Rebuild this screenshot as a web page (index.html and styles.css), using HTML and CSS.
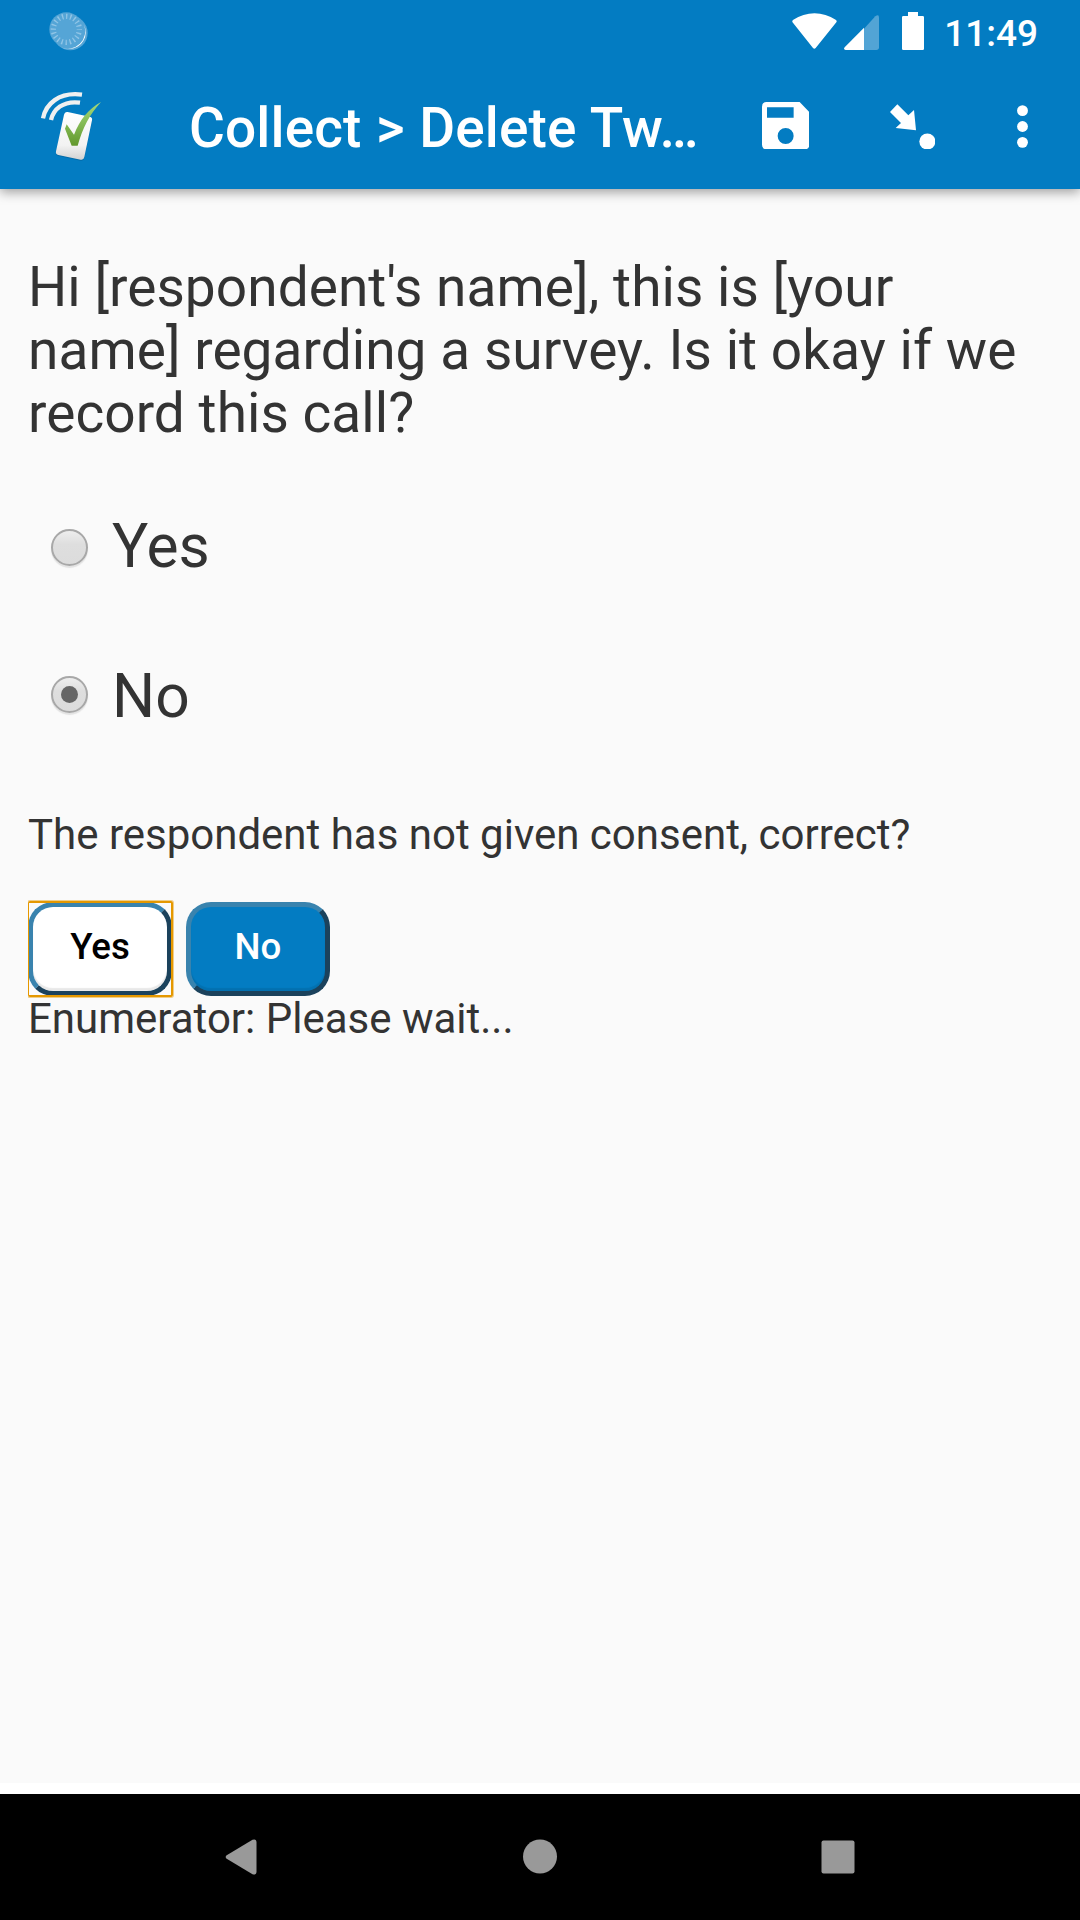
FILE: index.html
```
<!DOCTYPE html>
<html lang="en">
<head>
<meta charset="utf-8">
<title>Collect</title>
<link rel="stylesheet" href="styles.css">
</head>
<body>
<div class="screen">
  <header class="header">
    <div class="status-bar">
      <svg class="sync" viewBox="0 0 120 120">
        <circle cx="64" cy="63" r="52" fill="#55a5d6"/>
        <path d="M104 37A52 52 0 0 1 34 105Q44 111 62 111A50 50 0 0 0 104 37Z" fill="#fff"/>
        <circle cx="52" cy="52" r="51" fill="#55a5d6"/>
        <circle cx="52" cy="52" r="39" fill="none" stroke="#91c5e6" stroke-width="16" stroke-dasharray="4 8.252" stroke-dashoffset="2"/>
      </svg>
      <div class="status-icons">
        <svg class="wifi" viewBox="0 0 135 108"><path d="M1 27Q0 23 4 20C42-6 93-6 131 20Q136 23 133 28L71 105Q67 110 63 105Z" fill="#fff"/></svg>
        <svg class="signal" viewBox="0 0 105 105"><path d="M60 41L94 4Q105-4 105 8V97Q105 105 97 105H60Z" fill="#52a4d5"/><path d="M60 38V105H5Q-3 104 2 97Z" fill="#fff"/></svg>
        <svg class="battery" viewBox="0 0 66 114"><path d="M18 0H48V12H62Q66 12 66 16V110Q66 114 62 114H4Q0 114 0 110V16Q0 12 4 12H18Z" fill="#fff"/></svg>
        <span class="clock">11:49</span>
      </div>
    </div>
    <div class="toolbar">
      <svg class="logo" viewBox="60 270 189 219">
        <defs>
          <linearGradient id="card" x1="0" y1="0" x2="0" y2="1"><stop offset="0" stop-color="#fff"/><stop offset=".7" stop-color="#f2f2f2"/><stop offset="1" stop-color="#d2d2d2"/></linearGradient>
          <linearGradient id="tick" x1="0" y1="0" x2="0" y2="1"><stop offset="0" stop-color="#a5db7b"/><stop offset="1" stop-color="#62982d"/></linearGradient>
        </defs>
        <path d="M69 355C77 313 116 275 186 284" fill="none" stroke="#f0f0f0" stroke-width="13"/>
        <path d="M93 360C100 329 128 301 180 308" fill="none" stroke="#f0f0f0" stroke-width="13"/>
        <path d="M143 340L209 353Q218 355 216 364L193 474Q191 484 182 482L115 468Q106 466 108 457L132 347Q134 338 143 340Z" fill="#00568c" opacity=".45"/>
        <path d="M143 336L209 350Q218 352 216 361L193 471Q191 481 182 479L115 465Q106 463 108 454L132 344Q134 334 143 336Z" fill="url(#card)"/>
        <path d="M135 386L140 373L162 404C180 359 205 327 243 306C209 343 188 383 173 437H155Z" fill="url(#tick)"/>
      </svg>
      <h1 class="title">Collect &gt; Delete Tw…</h1>
      <svg class="save" viewBox="66 306 142 142"><path fill-rule="evenodd" d="M80 306H179L208 336V434Q208 448 194 448H80Q66 448 66 434V320Q66 306 80 306ZM81 322V353H161V322ZM137 384A24 24 0 1 0 137 432A24 24 0 1 0 137 384Z" fill="#fff"/></svg>
      <svg class="goto" viewBox="450 311 137 137"><path d="M472 312L505 345L522 329L528 390L467 383L483 368L450 335Z" fill="#fff"/><circle cx="562" cy="423.500" r="24" fill="#fff"/></svg>
      <svg class="more" viewBox="831 315 33 129"><g fill="#fff"><circle cx="847.500" cy="332" r="16.300"/><circle cx="847.500" cy="379.500" r="16.300"/><circle cx="847.500" cy="427" r="16.300"/></g></svg>
    </div>
  </header>

  <main class="form">
    <p class="question">Hi [respondent's name], this is [your name] regarding a survey. Is it okay if we record this call?</p>
    <div class="choices">
      <div class="choice"><span class="radio"></span><span class="label">Yes</span></div>
      <div class="choice"><span class="radio checked"></span><span class="label">No</span></div>
    </div>
    <p class="note">The respondent has not given consent, correct?</p>
    <div class="buttons">
      <button class="btn focused">Yes</button>
      <button class="btn primary">No</button>
    </div>
    <p class="note">Enumerator: Please wait...</p>
  </main>

  <nav class="nav-bar">
    <svg class="nav-icon" viewBox="0 0 36 36"><path d="M1.700 16.300Q-.300 18 1.700 19.800L27.500 35.200Q31.500 36.500 31.500 32.500V3.500Q31.500-.500 27.500 .800Z" fill="#999"/></svg>
    <svg class="nav-icon" viewBox="0 0 36 36"><circle cx="17" cy="17.500" r="17" fill="#999"/></svg>
    <svg class="nav-icon" viewBox="0 0 36 36"><rect x="1.500" y="1.500" width="33" height="33" rx="2" fill="#999"/></svg>
  </nav>
</div>
</body>
</html>
```
FILE: styles.css
```
* { box-sizing: border-box; }

body {
  margin: 0;
  font-family: Roboto, sans-serif;
  color: #333;
  background: #fafafa;
}

h1, p { margin: 0; font-weight: 400; }
svg { display: block; flex: none; }

.screen {
  display: flex;
  flex-direction: column;
  width: 1080px;
  height: 1920px;
  overflow: hidden;
}

.header {
  height: 189px;
  flex: none;
  background: #037cc2;
  color: #fff;
  box-shadow: 0 3px 11px rgba(0, 0, 0, .38);
}

.status-bar {
  display: flex;
  justify-content: space-between;
  height: 66px;
  padding: 12px 42px 0 49px;
}

.sync { width: 40px; height: 40px; }
.status-icons { display: flex; align-items: flex-start; }
.wifi { width: 45px; height: 36px; margin: 1px 7px 0 0; }
.signal { width: 35px; height: 35px; margin: 3px 23px 0 0; }
.battery { width: 22px; height: 38px; margin-right: 20px; }
.clock { font-size: 37px; font-weight: 500; line-height: 43px; }

.toolbar {
  display: flex;
  align-items: center;
  height: 123px;
  padding-left: 40px;
}

.logo { width: 63px; height: 73px; margin-top: -2px; }
.title {
  width: 573px;
  padding: 1px 0 0 86px;
  font-size: 55px;
  font-weight: 500;
  line-height: 65px;
  letter-spacing: .12px;
  word-spacing: .7px;
  white-space: nowrap;
}
.save { width: 47.300px; height: 47.300px; margin: -4px 0 0 86px; }
.goto { width: 45.700px; height: 45.700px; margin: -2px 0 0 80.500px; }
.more { width: 11px; height: 43px; margin: -2px 0 0 81.500px; }

.form { flex: 1; padding: 67px 28px 0; }

.question { font-size: 55px; line-height: 63px; letter-spacing: .05px; }

.choices { padding-top: 66px; }
.choice {
  display: flex;
  align-items: flex-start;
  height: 150px;
  padding-left: 23px;
}
.choice + .choice .radio { margin-top: 15px; }
.label { font-size: 60.500px; line-height: 72px; margin-left: 24px; }
.radio {
  display: flex;
  align-items: center;
  justify-content: center;
  width: 37px;
  height: 37px;
  margin-top: 18px;
  border: 2px solid #a8a8a8;
  border-radius: 50%;
  background: linear-gradient(#eee, #dedede 40%, #dcdcdc);
  box-shadow: 0 2px 1px #e2e2e2;
}
.radio.checked::after {
  content: "";
  width: 17px;
  height: 17px;
  border-radius: 50%;
  background: #666;
}

.note { font-size: 42px; line-height: 48px; }
.buttons + .note { margin-top: -1px; }

.buttons { display: flex; gap: 14px; padding: 43px 0 0; }
.btn {
  position: relative;
  width: 144px;
  height: 94px;
  padding: 0 0 5px;
  border: 5px solid;
  border-color: #3983ae #1b425c #1b425c #3983ae;
  border-radius: 25px;
  background: #fff;
  box-shadow: inset 0 -3px 1px rgba(0, 0, 0, .09);
  color: #000;
  font: 500 36.660px/43px Roboto, sans-serif;
}
.btn.primary { background: #037cc2; color: #fff; }
.btn.focused::after {
  content: "";
  position: absolute;
  inset: -6px -6px -6px -5px;
  border: 2px solid #e59800;
  border-left-width: 1px;
  border-radius: 2px;
  box-shadow: 0 0 0 1px rgba(229, 152, 0, .45);
  clip-path: inset(-1px -1px -1px 0);
}

.nav-bar {
  display: flex;
  align-items: center;
  justify-content: space-between;
  flex: none;
  height: 137px;
  padding: 0 224px 0 225px;
  border-top: 11px solid #fff;
  background: #000;
}
.nav-icon { width: 36px; height: 36px; }
```
